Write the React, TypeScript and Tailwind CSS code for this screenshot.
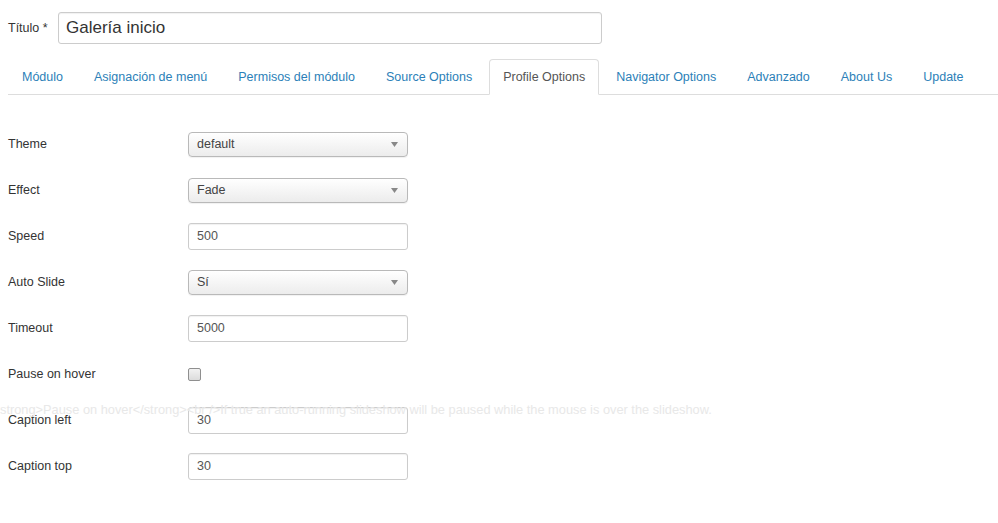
import React from "react";

const tabs = [
  "Módulo",
  "Asignación de menú",
  "Permisos del módulo",
  "Source Options",
  "Profile Options",
  "Navigator Options",
  "Advanzado",
  "About Us",
  "Update",
];

type Field =
  | { label: string; kind: "select"; value: string }
  | { label: string; kind: "input"; value: string }
  | { label: string; kind: "checkbox" };

const fields: Field[] = [
  { label: "Theme", kind: "select", value: "default" },
  { label: "Effect", kind: "select", value: "Fade" },
  { label: "Speed", kind: "input", value: "500" },
  { label: "Auto Slide", kind: "select", value: "Sí" },
  { label: "Timeout", kind: "input", value: "5000" },
  { label: "Pause on hover", kind: "checkbox" },
  { label: "Caption left", kind: "input", value: "30" },
  { label: "Caption top", kind: "input", value: "30" },
];

const SelectBox: React.FC<{ value: string }> = ({ value }) => (
  <div className="w-[220px] h-[25px] rounded-[4px] border border-[#b9b9b9] bg-gradient-to-b from-white to-[#ececec] flex items-center justify-between pl-[8px] pr-[9px] shadow-[0_1px_1px_rgba(0,0,0,0.06)]">
    <span className="text-[12.5px] text-[#444]">{value}</span>
    <svg width="7" height="5" viewBox="0 0 7 5">
      <path d="M0 0h7L3.5 5z" fill="#888" />
    </svg>
  </div>
);

const TextBox: React.FC<{ value: string }> = ({ value }) => (
  <div className="w-[220px] h-[27px] rounded-[3px] border border-[#ccc] bg-white flex items-center pl-[8px] shadow-[inset_0_1px_1px_rgba(0,0,0,0.06)]">
    <span className="text-[12.5px] text-[#555]">{value}</span>
  </div>
);

const CheckBox: React.FC = () => (
  <div className="w-[13px] h-[13px] rounded-[2px] border border-[#8f8f8f] bg-gradient-to-b from-[#f2f2f2] to-[#dcdcdc]" />
);

export default function App() {
  return (
    <div
      className="relative w-[998px] h-[523px] bg-white overflow-hidden text-[#333]"
      style={{ fontFamily: '"Liberation Sans", Arial, sans-serif' }}
    >
      {/* Title */}
      <div className="flex items-center pt-[12px] pl-[8px]">
        <label className="text-[12.5px] w-[50px]">Título *</label>
        <div className="w-[544px] h-[32px] rounded-[3px] border border-[#ccc] flex items-center pl-[7px] shadow-[inset_0_1px_1px_rgba(0,0,0,0.06)]">
          <span className="text-[17px] text-[#333]">Galería inicio</span>
        </div>
      </div>

      {/* Tabs */}
      <div className="flex ml-[8px] mt-[15px] border-b border-[#ddd] h-[36px]">
        {tabs.map((t) => {
          const active = t === "Profile Options";
          return (
            <div
              key={t}
              className={`shrink-0 whitespace-nowrap px-[13px] mr-[3px] h-[36px] flex items-center text-[12.5px] rounded-t-[4px] border ${
                active
                  ? "border-[#ddd] border-b-white bg-white text-[#555] mb-[-1px]"
                  : "border-transparent text-[#2c7fb8]"
              }`}
            >
              {t}
            </div>
          );
        })}
      </div>

      {/* Fields */}
      <div className="flex flex-col pl-[8px] pt-[36px] gap-[20px]">
        {fields.map((f) => (
          <div key={f.label} className="flex items-center h-[26px]">
            <div className="w-[180px] text-[12.5px] text-[#333]">{f.label}</div>
            {f.kind === "select" && <SelectBox value={f.value} />}
            {f.kind === "input" && <TextBox value={f.value} />}
            {f.kind === "checkbox" && <CheckBox />}
          </div>
        ))}
      </div>

      {/* Faded tooltip */}
      <div className="absolute left-[0px] top-[400px] text-[12.8px] text-[#e8e8e8] whitespace-nowrap pointer-events-none">
        {"strong>Pause on hover</strong><br />If true an auto-running slideshow will be paused while the mouse is over the slideshow."}
      </div>
    </div>
  );
}
